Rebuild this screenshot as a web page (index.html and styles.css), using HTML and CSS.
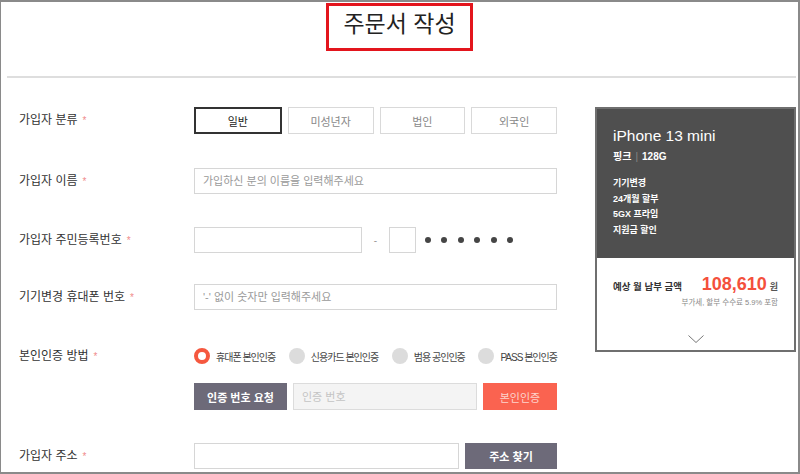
FILE: index.html
```html
<!DOCTYPE html>
<html lang="ko">
<head>
<meta charset="utf-8">
<title>주문서 작성</title>
<link rel="stylesheet" href="styles.css">
</head>
<body>
<div class="frame">
  <header class="head"><h1 class="title">주문서 작성</h1></header>
  <div class="sep"></div>
  <div class="main">
    <form class="form">
      <div class="row row-seg">
        <div class="label">가입자 분류<span class="req">*</span></div>
        <div class="field">
          <span class="seg on">일반</span>
          <span class="seg">미성년자</span>
          <span class="seg">법인</span>
          <span class="seg">외국인</span>
        </div>
      </div>
      <div class="row row-2">
        <div class="label">가입자 이름<span class="req">*</span></div>
        <div class="field"><input class="inp full" type="text" placeholder="가입하신 분의 이름을 입력해주세요"></div>
      </div>
      <div class="row row-3">
        <div class="label">가입자 주민등록번호<span class="req">*</span></div>
        <div class="field jumin">
          <input class="inp j1" type="text">
          <span class="dash">-</span>
          <input class="inp j2" type="text">
          <span class="dots"><i></i><i></i><i></i><i></i><i></i><i></i></span>
        </div>
      </div>
      <div class="row row-4">
        <div class="label">기기변경 휴대폰 번호<span class="req">*</span></div>
        <div class="field"><input class="inp full" type="text" placeholder="'-' 없이 숫자만 입력해주세요"></div>
      </div>
      <div class="row row-5">
        <div class="label">본인인증 방법<span class="req">*</span></div>
        <div class="field radios">
          <span class="opt"><span class="dot on"></span>휴대폰 본인인증</span>
          <span class="opt"><span class="dot"></span>신용카드 본인인증</span>
          <span class="opt"><span class="dot"></span>범용 공인인증</span>
          <span class="opt"><span class="dot"></span>PASS 본인인증</span>
        </div>
      </div>
      <div class="row row-6">
        <div class="label"></div>
        <div class="field">
          <span class="btn btn-dark b-req">인증 번호 요청</span>
          <input class="inp auth" type="text" placeholder="인증 번호">
          <span class="btn btn-red">본인인증</span>
        </div>
      </div>
      <div class="row row-7">
        <div class="label">가입자 주소<span class="req">*</span></div>
        <div class="field">
          <input class="inp addr" type="text">
          <span class="btn btn-dark b-addr">주소 찾기</span>
        </div>
      </div>
    </form>
    <aside class="card">
      <div class="dark">
        <div class="model">iPhone 13 mini</div>
        <div class="spec">핑크<span class="bar">|</span>128G</div>
        <ul class="opts">
          <li>기기변경</li>
          <li>24개월 할부</li>
          <li>5GX 프라임</li>
          <li>지원금 할인</li>
        </ul>
      </div>
      <div class="pay">
        <div class="pay-row">
          <span class="pay-label">예상 월 납부 금액</span>
          <span class="pay-val"><span class="amount">108,610</span><span class="won">원</span></span>
        </div>
        <div class="note">부가세, 할부 수수료 5.9% 포함</div>
        <svg class="chev" viewBox="0 0 16 8" width="16" height="8"><path d="M0.5 0.5 L8 7.5 L15.5 0.5" fill="none" stroke="#777" stroke-width="1"/></svg>
      </div>
    </aside>
  </div>
</div>
</body>
</html>
```
FILE: styles.css
```css
* { box-sizing: border-box; }
html, body { margin: 0; padding: 0; background: #fff; }
body {
  font-family: "Liberation Sans", "Noto Sans CJK KR", sans-serif;
  color: #333;
}
.frame {
  width: 800px;
  height: 474px;
  border: 2px solid #8a8a8a;
  border-left-width: 1px;
  overflow: hidden;
}
.head {
  height: 74px;
  text-align: center;
  padding-top: 1px;
}
.title {
  display: inline-block;
  margin: 0;
  height: 48px;
  border: 3px solid #e3151d;
  padding: 0 14px 10px;
  font-family: "Noto Sans CJK KR", sans-serif;
  font-size: 23px;
  font-weight: normal;
  line-height: 32px;
  color: #222;
}
.sep {
  height: 2px;
  background: #dedede;
  margin: 0 2px 0 6px;
}
.main {
  display: flex;
  align-items: flex-start;
  padding: 29px 0 0 18px;
}
.form { width: 538px; flex-shrink: 0; }
.row { display: flex; align-items: center; height: 26px; }
.row-seg { height: 27px; }
.row-2 { margin-top: 34px; }
.row-3 { margin-top: 33px; }
.row-4 { margin-top: 31px; }
.row-5 { margin-top: 34px; height: 24px; }
.row-6 { margin-top: 15px; height: 27px; }
.row-7 { margin-top: 33px; }
.label {
  width: 175px;
  flex-shrink: 0;
  font-size: 12px;
  color: #333;
  line-height: 16px;
}
.req {
  color: #f08c8c;
  font-size: 10px;
  margin-left: 5px;
}
.field {
  width: 363px;
  height: 100%;
  display: flex;
  align-items: center;
  gap: 6px;
}
.seg {
  flex: 1;
  height: 100%;
  display: flex;
  align-items: center;
  justify-content: center;
  border: 1px solid #d9d9d9;
  font-size: 11px;
  color: #888;
}
.seg.on { border: 2px solid #333; color: #222; }
.inp {
  height: 100%;
  border: 1px solid #d6d6d6;
  background: #fff;
  padding: 0 8px;
  font-family: inherit;
  font-size: 11px;
  color: #333;
  outline: none;
  margin: 0;
}
.inp::placeholder { color: #9a9a9a; }
.full { width: 100%; }
.jumin { gap: 0; }
.j1 { width: 168px; }
.dash { width: 27px; text-align: center; color: #999; font-size: 10px; }
.j2 { width: 27px; }
.dots { display: flex; gap: 10.4px; margin-left: 9px; }
.dots i { width: 6px; height: 6px; border-radius: 50%; background: #454545; }
.radios { justify-content: space-between; gap: 0; }
.opt {
  display: flex;
  align-items: center;
  gap: 6px;
  font-size: 10px;
  letter-spacing: -1px;
  color: #444;
}
.dot {
  width: 16px;
  height: 16px;
  border-radius: 50%;
  background: #dcdcdc;
}
.dot.on { background: #fff; border: 4px solid #f5583f; }
.btn {
  height: 100%;
  display: flex;
  align-items: center;
  justify-content: center;
  font-size: 11px;
  flex-shrink: 0;
}
.btn-dark { background: #6d6a79; color: #fff; font-weight: bold; }
.b-req { width: 93px; }
.b-addr { width: 92px; }
.auth { width: 184px; background: #f4f4f4; border-color: #dcdcdc; }
.auth::placeholder { color: #c4c4c4; }
.btn-red { width: 74px; background: #fa6350; color: #fdd3cc; }
.addr { width: 265px; }
.card {
  width: 201px;
  flex-shrink: 0;
  margin-left: 38px;
  border: 2px solid #6f6f6f;
}
.dark {
  background: #4f4f4f;
  color: #fff;
  padding: 18px 16px 20px;
}
.model { font-size: 15.5px; line-height: 18px; }
.spec { font-size: 10px; line-height: 14px; margin-top: 5px; font-weight: bold; }
.bar { color: #888; font-weight: normal; margin: 0 4px; }
.opts {
  list-style: none;
  margin: 12px 0 0;
  padding: 0;
  font-size: 9px;
  line-height: 15.5px;
  font-weight: bold;
}
.pay { padding: 15px 16px 7px; background: #fff; }
.pay-row {
  display: flex;
  justify-content: space-between;
  align-items: baseline;
  height: 22px;
  line-height: 22px;
}
.pay-label { font-size: 9.5px; font-weight: bold; color: #333; }
.amount { font-size: 18px; font-weight: bold; color: #f4503c; }
.won { font-size: 9px; font-weight: bold; color: #555; margin-left: 3px; }
.note {
  text-align: right;
  font-size: 7.5px;
  color: #888;
  line-height: 11px;
  margin-top: 2px;
}
.chev { display: block; margin: 27px auto 0; }
```
